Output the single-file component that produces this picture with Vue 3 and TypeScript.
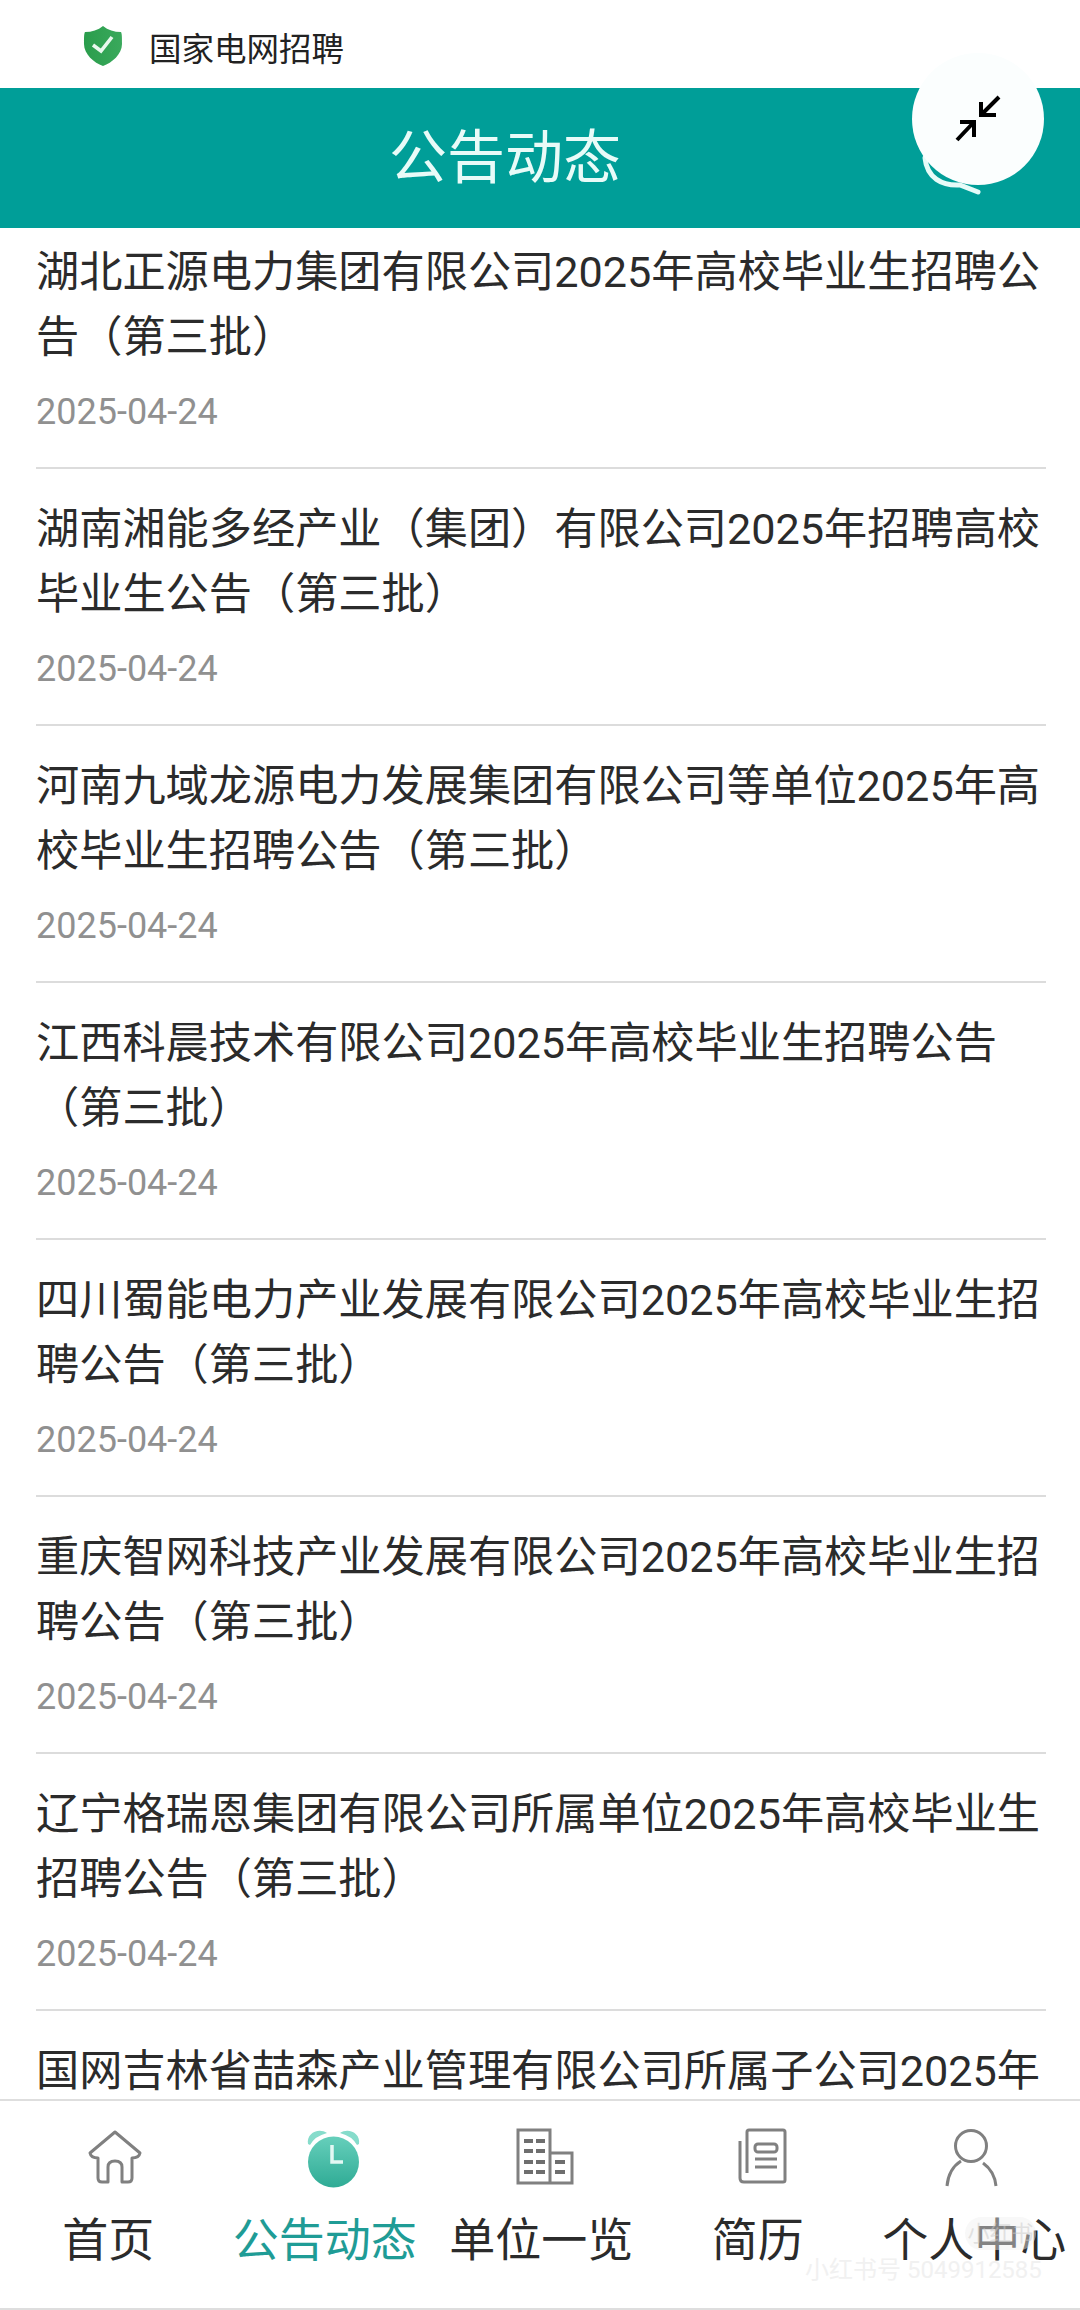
<script setup lang="ts">
interface Notice { title: string; date: string }
const notices: Notice[] = [
  { title: '湖北正源电力集团有限公司2025年高校毕业生招聘公告（第三批）', date: '2025-04-24' },
  { title: '湖南湘能多经产业（集团）有限公司2025年招聘高校毕业生公告（第三批）', date: '2025-04-24' },
  { title: '河南九域龙源电力发展集团有限公司等单位2025年高校毕业生招聘公告（第三批）', date: '2025-04-24' },
  { title: '江西科晨技术有限公司2025年高校毕业生招聘公告（第三批）', date: '2025-04-24' },
  { title: '四川蜀能电力产业发展有限公司2025年高校毕业生招聘公告（第三批）', date: '2025-04-24' },
  { title: '重庆智网科技产业发展有限公司2025年高校毕业生招聘公告（第三批）', date: '2025-04-24' },
  { title: '辽宁格瑞恩集团有限公司所属单位2025年高校毕业生招聘公告（第三批）', date: '2025-04-24' },
  { title: '国网吉林省喆森产业管理有限公司所属子公司2025年高校毕业生招聘公告（第三批）', date: '2025-04-24' }
]
const tabs = ['home', 'notice', 'org', 'resume', 'me'] as const
const labels: Record<string, string> = { home: '首页', notice: '公告动态', org: '单位一览', resume: '简历', me: '个人中心' }
</script>

<template>
  <div class="page">
    <div class="topbar">
      <svg class="shield" width="40" height="42" viewBox="0 0 40 42">
        <defs>
          <linearGradient id="shieldFill" x1="0" y1="0" x2="1" y2="0">
            <stop offset="0" stop-color="#2a9d4c" />
            <stop offset="1" stop-color="#3aa95c" />
          </linearGradient>
        </defs>
        <path d="M20 1 C25 5 31 7 38 7 C39 9 39 12 39 19 C39 29 29 38 20 41 C11 38 1 29 1 19 C1 12 1 9 2 7 C9 7 15 5 20 1 Z" fill="url(#shieldFill)" />
        <path d="M10 20 L18 26 L29 12" fill="none" stroke="#e9f8ee" stroke-width="3.6" />
      </svg>
      <span class="site">国家电网招聘</span>
    </div>
    <header class="header">公告动态</header>
    <svg class="float" width="132" height="150" viewBox="0 0 132 150">
      <path d="M13 105 C15 125 30 133 48 132 L66 139" fill="none" stroke="#e6fbf8" stroke-width="5" stroke-linecap="round" />
      <circle cx="66" cy="66" r="66" fill="#fbfefe" />
      <path d="M87 44 L69 62 M69 49 V62 H84 M45 87 L62 69 M48 69 H62 V84" fill="none" stroke="#000" stroke-width="4" />
    </svg>
    <main class="list">
      <article v-for="n in notices" :key="n.title" class="row">
        <h2 class="title">{{ n.title }}</h2>
        <time class="date">{{ n.date }}</time>
      </article>
    </main>
    <nav class="nav">
      <div v-for="t in tabs" :key="t" class="tab" :class="[t, { active: t === 'notice' }]">
        <svg class="icon" width="70" height="70" viewBox="0 0 70 70">
          <defs>
            <linearGradient id="clock" x1="0" y1="0" x2="0" y2="1">
              <stop offset="0" stop-color="#66cfbb" />
              <stop offset="1" stop-color="#2fab95" />
            </linearGradient>
          </defs>
          <path
            v-if="t === 'home'"
            d="M35 12 L60 33 Q59 38 52 38 V58 Q52 62 48 62 H42 V47 Q42 41 35 41 Q28 41 28 47 V62 H22 Q18 62 18 58 V38 Q11 38 10 33 Z"
            fill="none" stroke="#808080" stroke-width="3" stroke-linejoin="round"
          />
          <g v-else-if="t === 'notice'">
            <path d="M8 24 C6 13 19 7 27 13 Q15 16 10 25 Z M59 24 C61 13 48 7 40 13 Q52 16 57 25 Z" fill="#86dccb" />
            <circle cx="33.5" cy="42" r="25.5" fill="url(#clock)" />
            <path d="M32 25 V42 H43" fill="none" stroke="#e3f8f3" stroke-width="3.5" />
          </g>
          <g v-else-if="t === 'org'" fill="none" stroke="#808080" stroke-width="3">
            <path d="M8 10 H40 V63 H8 Z M40 33 H62 V63 H40" />
            <path d="M14 21 H23 M26 21 H35 M14 31 H23 M26 31 H35 M14 42 H23 M26 42 H35 M14 52 H23 M26 52 H35 M45 42 H55 M45 52 H55" stroke="#6e6e6e" stroke-width="4" />
          </g>
          <g v-else-if="t === 'resume'" fill="none" stroke="#808080" stroke-width="3">
            <path d="M17 53 V12 Q17 10 19 10 H53 Q55 10 55 12 V60 Q55 62 53 62 H14 Q10 62 10 58 V21" stroke-linejoin="round" />
            <rect x="25" y="24" width="22" height="8" rx="3" />
            <path d="M25 39 H47 M25 47 H47" />
          </g>
          <g v-else fill="none" stroke="#808080" stroke-width="3">
            <circle cx="32" cy="26" r="15.5" />
            <path d="M8 66 C9 55 14 46 22 41 M44 43 C51 48 56 56 57 66" />
          </g>
        </svg>
        <span class="label">{{ labels[t] }}</span>
      </div>
    </nav>
    <div class="mark-pill">小红书</div>
    <div class="mark-id">小红书号 5049912585</div>
  </div>
</template>

<style>
html, body { margin: 0; background: #fff; }
</style>

<style scoped>
.page {
  position: relative;
  width: 1080px;
  height: 2310px;
  overflow: hidden;
  background: #fff;
  display: flex;
  flex-direction: column;
  font-family: Roboto, "Noto Sans CJK SC", sans-serif;
}
.topbar {
  height: 88px;
  flex: none;
  display: flex;
  align-items: center;
  gap: 26px;
  padding: 4px 0 0 83px;
  box-sizing: border-box;
}
.site { font-size: 32.5px; color: #222; }
.header {
  height: 140px;
  flex: none;
  background: #009e98;
  color: #e8fbf8;
  font-size: 58px;
  line-height: 140px;
  text-align: center;
  padding-right: 70px;
  box-sizing: border-box;
}
.float { position: absolute; left: 912px; top: 53px; }
.list {
  flex: 1;
  min-height: 0;
  overflow: hidden;
  padding: 0 34px 0 36px;
}
.row {
  height: 257px;
  padding-top: 28px;
  box-sizing: border-box;
  border-bottom: 2px solid #dcdcdc;
}
.row:first-child { height: 241px; padding-top: 12px; }
.title {
  margin: 0;
  font-size: 43.2px;
  font-weight: 400;
  line-height: 65px;
  color: #2b2b2b;
}
.date { display: block; margin-top: 20px; font-size: 36px; line-height: 44px; color: #909090; }
.nav {
  height: 211px;
  flex: none;
  display: grid;
  grid-template-columns: repeat(5, 216.5px);
  box-sizing: border-box;
  border-top: 2px solid #dedede;
  border-bottom: 2px solid #dedede;
  background: #fff;
}
.tab { display: flex; flex-direction: column; align-items: center; padding-top: 19px; }
.home .icon, .resume .icon { margin-left: 14px; }
.notice .icon { margin-left: 20px; }
.org .icon { margin-left: 8px; }
.label { margin-top: 22px; font-size: 46px; line-height: 56px; color: #2b2b2b; white-space: nowrap; }
.active .label { color: #1f9c96; }
.mark-pill {
  position: absolute; left: 965px; top: 2217px;
  width: 71px; height: 33px;
  border-radius: 17px;
  background: rgba(240, 240, 240, 0.45);
  color: rgba(200, 200, 200, 0.5);
  font-size: 22px;
  line-height: 33px;
  text-align: center;
}
.mark-id {
  position: absolute; left: 805px; top: 2256px;
  font-size: 24px;
  line-height: 28px;
  color: #f1f1f1;
  white-space: nowrap;
}
</style>
